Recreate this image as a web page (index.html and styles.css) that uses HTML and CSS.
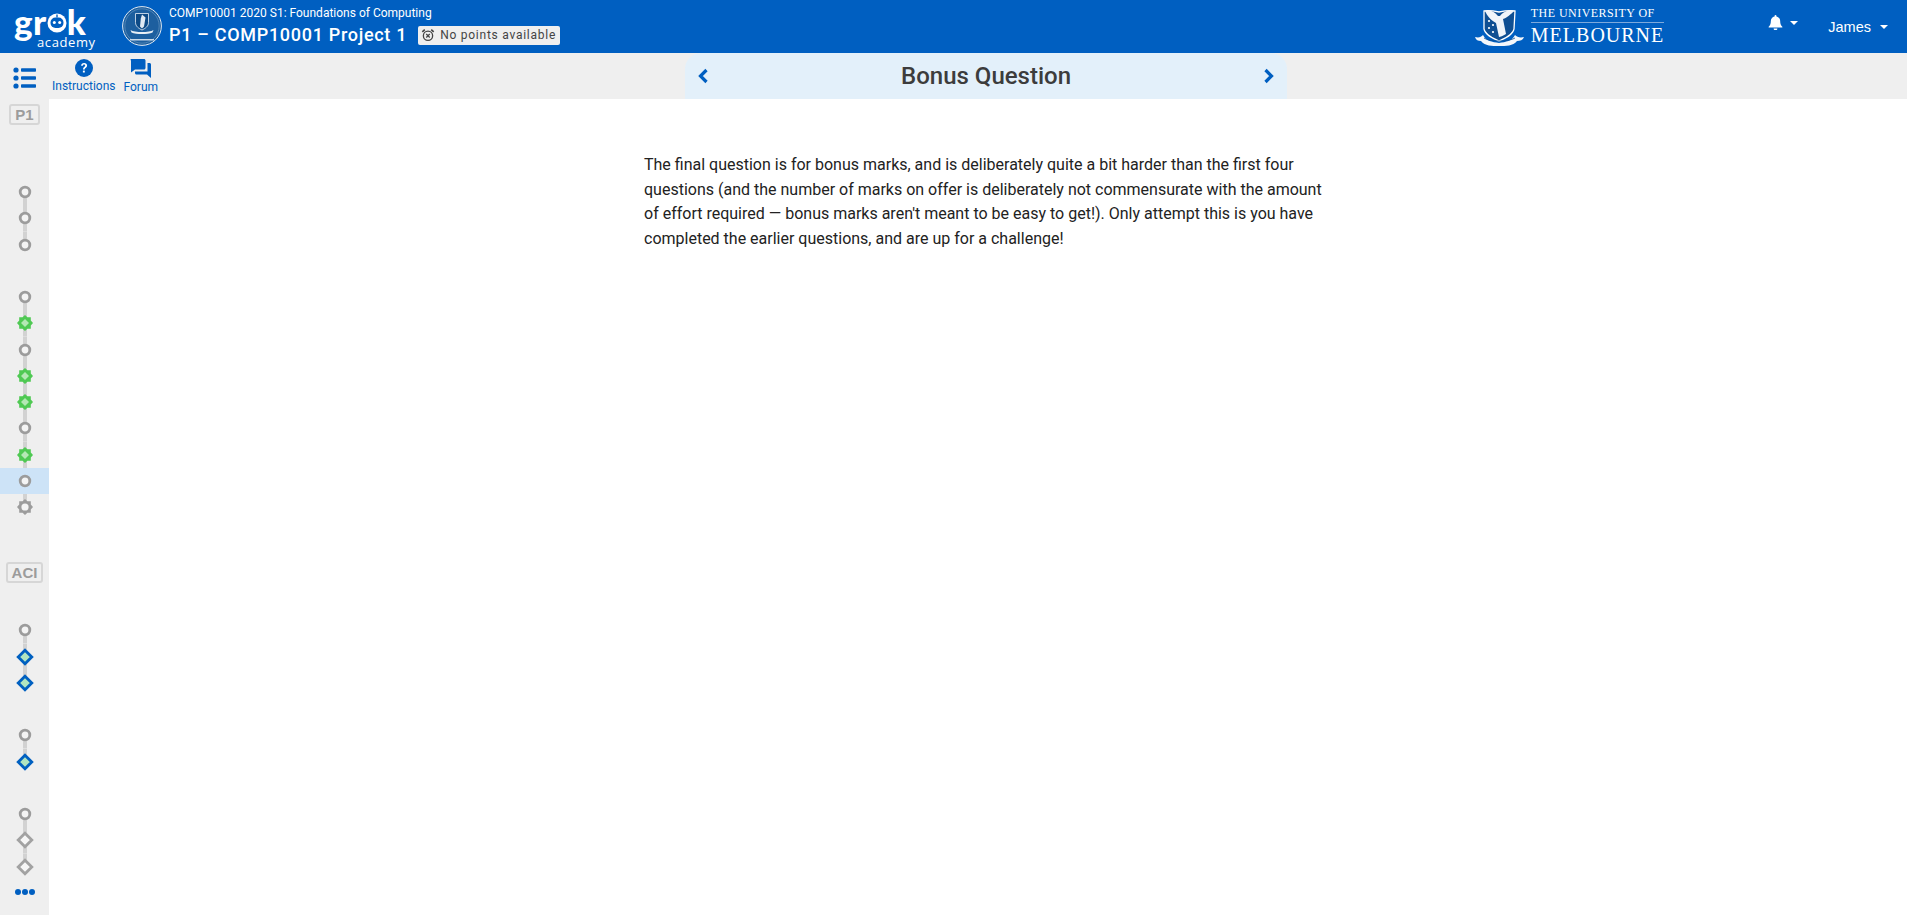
FILE: index.html
```html
<!DOCTYPE html>
<html lang="en">
<head>
<meta charset="utf-8">
<title>Bonus Question</title>
<link rel="stylesheet" href="styles.css">
</head>
<body>
<svg class="defs" width="0" height="0" aria-hidden="true">
  <symbol id="n-circle" viewBox="0 0 16 16"><circle cx="8" cy="8" r="4.8" fill="#f4f4f4" stroke="#9c9c9c" stroke-width="2.8"/></symbol>
  <symbol id="n-green" viewBox="0 0 18 18"><path d="M9 1l2.4 2.2h3.4v3.4L17 9l-2.2 2.4v3.4h-3.4L9 17l-2.4-2.2H3.2v-3.4L1 9l2.2-2.4V3.200h3.400z" fill="#4fc953"/><path d="M9 5l4 4-4 4-4-4z" fill="#b4e8b4"/></symbol>
  <symbol id="n-gear" viewBox="0 0 18 18"><path d="M9 1l2.400 2.200h3.400v3.400L17 9l-2.200 2.400v3.400h-3.400L9 17l-2.400-2.200H3.200v-3.400L1 9l2.200-2.400V3.200h3.400z" fill="#9c9c9c"/><circle cx="9" cy="9" r="3.600" fill="#f4f4f4"/></symbol>
  <symbol id="n-blue" viewBox="0 0 18 18"><path d="M9 2.200L15.800 9 9 15.800 2.200 9z" fill="#b0e5c0" stroke="#0060c0" stroke-width="2.800"/></symbol>
  <symbol id="n-grey" viewBox="0 0 18 18"><path d="M9 2.200L15.800 9 9 15.800 2.200 9z" fill="#f6f6f6" stroke="#a2a2a2" stroke-width="2.800"/></symbol>
</svg>

<header class="topbar">
  <div class="grok">
    <div class="grok-word">
      <span>gr</span>
      <svg class="grok-o" viewBox="0 0 20 20" width="20" height="20" aria-hidden="true">
        <circle cx="10" cy="10" r="9.500" fill="#fff"/>
        <path d="M9.300 1.500h1.400v3h-1.400z" fill="#005fc1"/>
        <rect x="3.500" y="4.500" width="13" height="10.500" rx="5" fill="#005fc1"/>
        <circle cx="7.300" cy="9.500" r="1.500" fill="#fff"/>
        <circle cx="12.700" cy="9.500" r="1.500" fill="#fff"/>
      </svg>
      <span>k</span>
    </div>
    <div class="grok-sub">academy</div>
  </div>

  <svg class="seal" viewBox="0 0 40 40" width="40" height="40" aria-hidden="true">
    <circle cx="20" cy="20" r="19.400" fill="#1d5f9f" stroke="#dfe9f3" stroke-width="1"/>
    <circle cx="20" cy="20" r="17.200" fill="none" stroke="#7fa6cb" stroke-width=".5"/>
    <path d="M13.500 7.500h13v9c0 4-3.500 6-6.500 7.500-3-1.500-6.500-3.500-6.500-7.500z" fill="#0d4a86" stroke="#e8eff6" stroke-width=".8"/>
    <path d="M20 8.500l3.500 3-1.500 9-2 2-2-2 .8-8z" fill="#dfe9f3"/>
    <path d="M8.500 24c4 2.800 19 2.800 23 0l-1 2.600c-5 2-16 2-21 0z" fill="#e8eff6"/>
    <path d="M8 33h24v1.500H8z" fill="#c9d9e8"/>
  </svg>

  <div class="course">
    <div class="course-name">COMP10001 2020 S1: Foundations of Computing</div>
    <div class="course-title">
      <span class="project">P1 – COMP10001 Project 1</span>
      <span class="points">
        <svg viewBox="0 0 16 16" width="14" height="14" aria-hidden="true">
          <circle cx="8" cy="8.800" r="5.300" fill="none" stroke="#444" stroke-width="1.500"/>
          <path d="M6 6.800l4 4m0-4l-4 4" stroke="#444" stroke-width="1.400"/>
          <path d="M1.500 4.500L4.300 1.800 M14.500 4.500L11.700 1.800" stroke="#444" stroke-width="1.800"/>
        </svg>
        No points available
      </span>
    </div>
  </div>

  <div class="uom">
    <svg class="crest" viewBox="0 0 49 40" width="49" height="40" aria-hidden="true">
      <path d="M9 5c5-1 10 0 15 1 5-1 10-2 16-1l-1 18c-1 6-9 9-15 12-6-3-14-6-15-12z" fill="#0f4f93" stroke="#fff" stroke-width="1.300"/>
      <path d="M10 5c4-2 9 0 13 5l2 0c3-4 9-7 14-5-3 3-7 7-11 8l3 15c-3 2-6 3-7 3l-3-14c-4-2-9-7-11-12z" fill="#f1f5fa"/>
      <g fill="#fff"><circle cx="14" cy="15" r="1.100"/><circle cx="18" cy="19" r="1.100"/><circle cx="14" cy="22" r="1.100"/><circle cx="18" cy="26" r="1.100"/></g>
      <path d="M0 31c4 1 6 0 8-2 3 6 9 7 16 8 7-1 13-2 16-8 2 2 5 3 9 2-1 3-4 4-7 4-4 5-11 5-18 5s-14 0-18-5c-3 0-5-1-6-4z" fill="#f4f7fb"/>
      <path d="M9 32c5 4 25 4 31 0" fill="none" stroke="#0f4f93" stroke-width=".8"/>
    </svg>
    <div class="uom-text">
      <div class="uom-top">THE UNIVERSITY OF</div>
      <div class="uom-main">MELBOURNE</div>
    </div>
  </div>

  <div class="bell">
    <svg viewBox="0 0 16 16" width="15" height="15" aria-hidden="true">
      <path d="M8 0a1 1 0 0 1 1 1v.600c2.500.500 4 2.500 4 5 0 3 .800 4.400 2.300 5.900v.900H.700v-.900C2.200 11 3 9.600 3 6.600c0-2.500 1.500-4.500 4-5V1a1 1 0 0 1 1-1zM6 14.300h4a2 2 0 0 1-4 0z" fill="#fff"/>
    </svg>
    <span class="caret"></span>
  </div>
  <div class="user">James<span class="caret"></span></div>
</header>

<nav class="toolbar">
  <div class="tool-list">
    <svg viewBox="0 0 23 22" width="23" height="22" aria-hidden="true">
      <g fill="#005fc1">
        <circle cx="3" cy="3" r="2.600"/><circle cx="3" cy="11" r="2.600"/><circle cx="3" cy="19" r="2.600"/>
        <rect x="8" y="1.300" width="15" height="3.400" rx=".8"/><rect x="8" y="9.300" width="15" height="3.400" rx=".8"/><rect x="8" y="17.300" width="15" height="3.400" rx=".8"/>
      </g>
    </svg>
  </div>
  <a class="tool-link tool-instr">
    <svg viewBox="0 0 18 18" width="18" height="18" aria-hidden="true">
      <circle cx="9" cy="9" r="9" fill="#005fc1"/>
      <path d="M6.100 6.800C6.200 5 7.400 4 9.100 4c1.800 0 3 1 3 2.500 0 1.300-.800 1.900-1.500 2.400-.700.500-.900.800-.900 1.700H8c0-1.500.400-2 1.200-2.600.600-.400 1-.800 1-1.400 0-.600-.500-1-1.100-1-.800 0-1.200.500-1.300 1.200z" fill="#fff"/>
      <rect x="7.900" y="11.600" width="1.900" height="1.900" fill="#fff"/>
    </svg>
    <span>Instructions</span>
  </a>
  <a class="tool-link tool-forum">
    <svg viewBox="0 0 21 19" width="21" height="19" aria-hidden="true">
      <path d="M1.500 0h12.500c.8 0 1.500.7 1.500 1.500v7.500c0 .8-.7 1.500-1.500 1.500H5L1 13.500V1.500C0 .7.700 0 1.500 0z" fill="#005fc1"/>
      <path d="M17.500 4H19.500c.8 0 1.500.7 1.500 1.500V19l-4-3.500H6.500c-.8 0-1.500-.7-1.500-1.500v-1.500h12.500z" fill="#005fc1"/>
    </svg>
    <span>Forum</span>
  </a>
  <div class="pill">
    <svg viewBox="0 0 12 16" width="12" height="16" aria-hidden="true"><path d="M9.500 2L3.500 8l6 6" fill="none" stroke="#005fc1" stroke-width="3.200"/></svg>
    <h1>Bonus Question</h1>
    <svg viewBox="0 0 12 16" width="12" height="16" aria-hidden="true"><path d="M2.500 2l6 6-6 6" fill="none" stroke="#005fc1" stroke-width="3.200"/></svg>
  </div>
</nav>

<div class="body">
  <aside class="sidebar">
    <div class="badge badge-p1">P1</div>
    <div class="group">
      <div class="row"><svg width="16" height="16"><use href="#n-circle"/></svg></div>
      <div class="row"><svg width="16" height="16"><use href="#n-circle"/></svg></div>
      <div class="row"><svg width="16" height="16"><use href="#n-circle"/></svg></div>
    </div>
    <div class="group">
      <div class="row"><svg width="16" height="16"><use href="#n-circle"/></svg></div>
      <div class="row"><svg width="18" height="18"><use href="#n-green"/></svg></div>
      <div class="row"><svg width="16" height="16"><use href="#n-circle"/></svg></div>
      <div class="row"><svg width="18" height="18"><use href="#n-green"/></svg></div>
      <div class="row"><svg width="18" height="18"><use href="#n-green"/></svg></div>
      <div class="row"><svg width="16" height="16"><use href="#n-circle"/></svg></div>
      <div class="row"><svg width="18" height="18"><use href="#n-green"/></svg></div>
      <div class="row row-active"><svg width="16" height="16"><use href="#n-circle"/></svg></div>
      <div class="row"><svg width="18" height="18"><use href="#n-gear"/></svg></div>
    </div>
    <div class="badge badge-aci">ACI</div>
    <div class="group">
      <div class="row"><svg width="16" height="16"><use href="#n-circle"/></svg></div>
      <div class="row"><svg width="18" height="18"><use href="#n-blue"/></svg></div>
      <div class="row"><svg width="18" height="18"><use href="#n-blue"/></svg></div>
    </div>
    <div class="group">
      <div class="row"><svg width="16" height="16"><use href="#n-circle"/></svg></div>
      <div class="row"><svg width="18" height="18"><use href="#n-blue"/></svg></div>
    </div>
    <div class="group">
      <div class="row"><svg width="16" height="16"><use href="#n-circle"/></svg></div>
      <div class="row"><svg width="18" height="18"><use href="#n-grey"/></svg></div>
      <div class="row"><svg width="18" height="18"><use href="#n-grey"/></svg></div>
    </div>
    <div class="more"><i></i><i></i><i></i></div>
  </aside>
  <main class="content">
    <p>The final question is for bonus marks, and is deliberately quite a bit harder than the first four questions (and the number of marks on offer is deliberately not commensurate with the amount of effort required — bonus marks aren't meant to be easy to get!). Only attempt this is you have completed the earlier questions, and are up for a challenge!</p>
  </main>
</div>
</body>
</html>
```
FILE: styles.css
```css
* { box-sizing: border-box; }
html, body { height: 100%; }
body {
  margin: 0;
  height: 915px;
  overflow: hidden;
  display: flex;
  flex-direction: column;
  background: #fff;
  font-family: Roboto, "Liberation Sans", sans-serif;
  color: #222;
}
.defs { display: block; height: 0; }

.topbar {
  height: 53px;
  flex: none;
  display: flex;
  align-items: flex-start;
  background: #005fc1;
  color: #fff;
}
.grok { margin: 0 0 0 14px; width: 78px; flex: none; display: flex; flex-direction: column; align-items: flex-start; }
.grok-word {
  display: flex;
  align-items: flex-start;
  height: 30px;
  margin-top: 1px;
  font-family: Lato, sans-serif;
  font-weight: 900;
  font-size: 35px;
  line-height: 40px;
  letter-spacing: .5px;
}
.grok-o { margin: 12px 0 0 0; flex: none; }
.grok-sub {
  margin: 4px 0 0 23px;
  font-family: "Open Sans", sans-serif;
  font-size: 13px;
  line-height: 14px;
  letter-spacing: .6px;
}
.seal { margin: 6px 0 0 30px; flex: none; }
.course { margin: 5px 0 0 7px; flex: none; }
.course-name { font-size: 12px; line-height: 16px; }
.course-title { display: flex; align-items: center; margin-top: 1px; }
.project { font-size: 18px; line-height: 26px; font-weight: 500; letter-spacing: .7px; }
.points {
  display: inline-flex;
  align-items: center;
  gap: 5px;
  height: 19px;
  margin-left: 11px;
  padding: 0 4px 0 3px;
  background: #efefef;
  border-radius: 2px;
  color: #444;
  font-size: 12px;
  letter-spacing: .75px;
}
.uom { margin-left: auto; display: flex; align-items: flex-start; flex: none; }
.crest { margin: 6px 0 0 0; }
.uom-text { margin: 6px 0 0 7px; color: #fff; font-family: "Liberation Serif", serif; }
.uom-top {
  font-size: 12px;
  line-height: 14px;
  letter-spacing: .45px;
  padding-bottom: 2px;
  border-bottom: 1px solid #7da9dc;
  white-space: nowrap;
}
.uom-main { font-size: 20px; line-height: 22px; letter-spacing: 1px; margin-top: 1px; white-space: nowrap; }
.bell { margin: 15px 0 0 104px; display: flex; align-items: center; gap: 7px; flex: none; height: 15px; }
.user {
  margin: 18px 19px 0 30px;
  font-family: "Liberation Sans", sans-serif;
  font-size: 14.500px;
  line-height: 18px;
  display: flex;
  align-items: center;
  gap: 9px;
  flex: none;
}
.caret {
  width: 0;
  height: 0;
  border-left: 4px solid transparent;
  border-right: 4px solid transparent;
  border-top: 4px solid #fff;
}

.toolbar {
  height: 46px;
  flex: none;
  display: flex;
  align-items: flex-start;
  background: #efefef;
}
.tool-list { width: 49px; padding: 14px 0 0 13px; flex: none; }
.tool-list svg { display: block; }
.tool-link {
  display: flex;
  flex-direction: column;
  align-items: center;
  padding-top: 6px;
  color: #005fc1;
  font-size: 12px;
  line-height: 15px;
  flex: none;
}
.tool-link svg { display: block; margin-bottom: 2px; }
.tool-instr { margin-left: 3px; }
.tool-forum { margin-left: 8px; }
.pill {
  width: 602px;
  height: 46px;
  margin-left: 527px;
  padding: 0 12px;
  flex: none;
  display: flex;
  align-items: center;
  justify-content: space-between;
  background: #e3f0fa;
  border-radius: 16px 16px 0 0;
}
.pill h1 { margin: 0; font-size: 24px; line-height: 30px; font-weight: 500; color: #3c3c3c; }

.body { flex: 1; display: flex; min-height: 0; }
.sidebar { width: 49px; flex: none; background: #efefef; padding-top: 5px; }
.badge {
  width: max-content;
  margin: 0 auto;
  height: 21px;
  padding: 0 4px;
  border: 2px solid #d6d6d6;
  border-radius: 3px;
  color: #9c9c9c;
  font-family: "Liberation Sans", sans-serif;
  font-size: 15px;
  font-weight: 700;
  line-height: 17px;
}
.badge-p1 { margin-bottom: 54px; }
.badge-aci { margin-top: 42px; margin-bottom: 34px; }
.badge-aci + .group { margin-top: 0; }
.badge-p1 + .group { margin-top: 0; }
.group { margin-top: 26.250px; }
.row {
  height: 26.250px;
  display: flex;
  align-items: center;
  justify-content: center;
  background: linear-gradient(#d2d2d2, #d2d2d2) center / 4px 100% no-repeat;
}
.row:first-child { background-position: center bottom; background-size: 4px 50%; }
.row:last-child { background-position: center top; background-size: 4px 50%; }
.row-active { background: #cde3f7; }
.row svg { display: block; }
.more { height: 24px; display: flex; align-items: center; justify-content: center; gap: 1px; }
.more i { width: 6px; height: 6px; border-radius: 50%; background: #005fc1; }

.content { flex: 1; padding: 54px 0 0 595px; }
.content p {
  margin: 0;
  width: 690px;
  font-size: 16px;
  line-height: 24.500px;
  color: #222;
}
```
